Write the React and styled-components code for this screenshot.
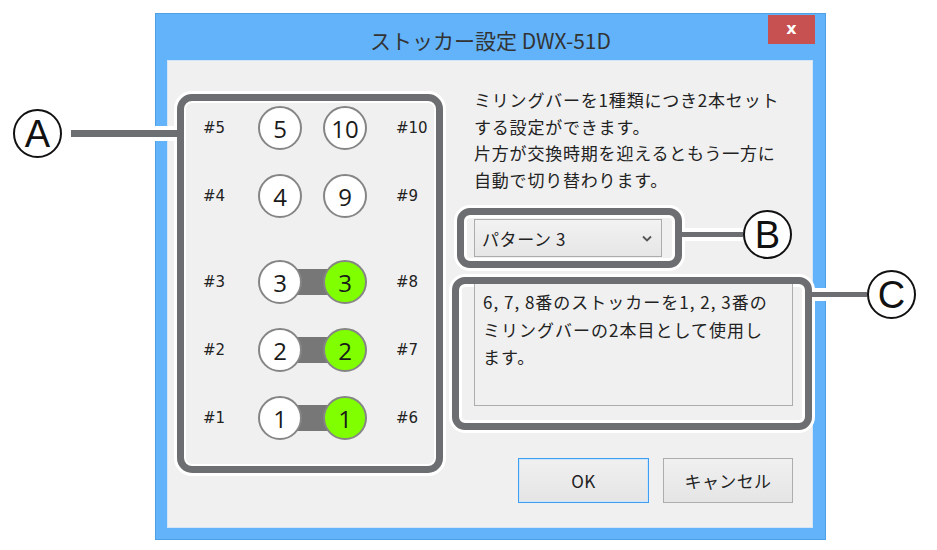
import React from 'react';
import styled, { createGlobalStyle } from 'styled-components';

const JP = `"Noto Sans CJK JP", "Noto Sans", sans-serif`;

const GlobalStyle = createGlobalStyle`
  * { box-sizing: border-box; }
  body {
    margin: 0;
    background: #fff;
    font-family: ${JP};
  }
`;

const slots = [
  { left: 5, right: 10 },
  { left: 4, right: 9 },
  { left: 3, right: 8, paired: true, spaced: true },
  { left: 2, right: 7, paired: true },
  { left: 1, right: 6, paired: true },
];

const App = () => {
  return (
    <React.Fragment>
      <GlobalStyle />
      <Page>
        <Window>
          <TitleBar>
            <Title>ストッカー設定 DWX-51D</Title>
            <CloseButton>x</CloseButton>
          </TitleBar>
          <Client>
            <SlotPanel>
              <Callout $side="left" $top={8}>
                <Mark>A</Mark>
                <Leader $w={106} $h={7} $gap={9} />
              </Callout>
              {slots.map((s) => (
                <SlotRow key={s.left} $spaced={s.spaced}>
                  <SlotLabel>#{s.left}</SlotLabel>
                  <Pair $paired={s.paired}>
                    <Stocker>{s.left}</Stocker>
                    <Stocker $green={s.paired}>{s.paired ? s.left : s.right}</Stocker>
                  </Pair>
                  <SlotLabel $right>#{s.right}</SlotLabel>
                </SlotRow>
              ))}
            </SlotPanel>

            <Side>
              <Note>
                ミリングバーを1種類につき2本セット<br />
                する設定ができます。<br />
                片方が交換時期を迎えるともう一方に<br />
                自動で切り替わります。
              </Note>

              <PatternBox>
                <Combo>
                  <span>パターン 3</span>
                  <svg width="10" height="7" viewBox="0 0 10 7">
                    <path d="M1 1.5 L5 5.5 L9 1.5" fill="none" stroke="#555" strokeWidth="1.8" />
                  </svg>
                </Combo>
                <Callout $side="right" $top={-5}>
                  <Leader $w={61} $h={5} />
                  <Mark>B</Mark>
                </Callout>
              </PatternBox>

              <InfoBox>
                <InfoText>
                  6, 7, 8番のストッカーを1, 2, 3番の<br />
                  ミリングバーの2本目として使用し<br />
                  ます。
                </InfoText>
                <Callout $side="right" $top={-14}>
                  <Leader $w={55} $h={5} />
                  <Mark>C</Mark>
                </Callout>
              </InfoBox>

              <ButtonRow>
                <Button $primary>OK</Button>
                <Button>キャンセル</Button>
              </ButtonRow>
            </Side>
          </Client>
        </Window>
      </Page>
    </React.Fragment>
  );
};

const Page = styled.div`
  width: 937px;
  height: 550px;
  padding: 13px 0 0 155px;
  background: #fff;
  overflow: hidden;
`;

const Window = styled.div`
  width: 671px;
  height: 527px;
  background: #62b3fa;
  border: 1px solid #4f9fe4;
  padding: 0 12px 11px 11px;
  display: flex;
  flex-direction: column;
`;

const TitleBar = styled.div`
  height: 46px;
  display: grid;
  grid-template-columns: 1fr auto 1fr;
  margin: 0 -12px 0 -11px;
`;

const Title = styled.div`
  grid-column: 2;
  padding-top: 10px;
  font-size: 21px;
  line-height: 32px;
  color: #333;
  white-space: nowrap;
`;

const CloseButton = styled.div`
  grid-column: 3;
  justify-self: end;
  align-self: start;
  margin: 1px 10px 0 0;
  width: 47px;
  height: 29px;
  background: #c75050;
  color: #fff;
  font-family: "DejaVu Sans", sans-serif;
  font-weight: 700;
  font-size: 16px;
  line-height: 27px;
  text-align: center;
`;

const Client = styled.div`
  flex: 1;
  display: flex;
  align-items: flex-start;
  background: #f0f0f0;
  border: 1px solid #d3e5f6;
`;

const SlotPanel = styled.div`
  position: relative;
  margin: 33px 0 0 9px;
  width: 266px;
  height: 379px;
  border: 7px solid #6d6e71;
  border-radius: 15px;
  box-shadow: 0 0 0 3px #fff, inset 0 0 0 2px #fff;
  padding: 5px 0 0 19px;
  display: flex;
  flex-direction: column;
  gap: 24px;
`;

const SlotRow = styled.div`
  display: flex;
  align-items: center;
  height: 44px;
  margin-top: ${(p) => (p.$spaced ? '18px' : '0')};
`;

const SlotLabel = styled.span`
  width: ${(p) => (p.$right ? 'auto' : '55px')};
  margin-left: ${(p) => (p.$right ? '29px' : '0')};
  font-family: "DejaVu Sans", sans-serif;
  font-size: 15px;
  color: #222;
`;

const Pair = styled.div`
  width: 109px;
  display: flex;
  justify-content: space-between;
  background: ${(p) =>
    p.$paired ? 'linear-gradient(#777, #777) center / 64px 26px no-repeat' : 'none'};
`;

const Stocker = styled.div`
  width: 44px;
  height: 44px;
  border-radius: 50%;
  border: 2px solid #858585;
  background: ${(p) => (p.$green ? '#80ff00' : '#fff')};
  display: flex;
  align-items: center;
  justify-content: center;
  font-family: "Open Sans", "Noto Sans", sans-serif;
  font-size: 24px;
  color: #1a1a1a;
`;

const Side = styled.div`
  margin: 26px 0 0 9px;
  width: 360px;
  display: flex;
  flex-direction: column;
`;

const Note = styled.p`
  margin: 0 0 0 22px;
  font-size: 17px;
  line-height: 26.5px;
  letter-spacing: 0.8px;
  color: #222;
  white-space: nowrap;
`;

const OutlineBox = styled.div`
  position: relative;
  border: 7px solid #6d6e71;
  border-radius: 13px;
  box-shadow: 0 0 0 3px #fff, inset 0 0 0 3px #fff;
`;

const PatternBox = styled(OutlineBox)`
  margin: 15px 0 0 5px;
  width: 225px;
  padding: 4px 13px 4px 10px;
`;

const Combo = styled.div`
  height: 38px;
  border: 1px solid #acacac;
  background: linear-gradient(#f2f2f2, #e6e6e6);
  display: flex;
  align-items: center;
  justify-content: space-between;
  padding: 0 9px 0 7px;
  font-size: 17px;
  color: #222;
  letter-spacing: 0.6px;
`;

const InfoBox = styled(OutlineBox)`
  margin-top: 9px;
  width: 360px;
  height: 153px;
  padding: 0 12px 17px 15px;
`;

const InfoText = styled.div`
  height: 100%;
  border: 1px solid #adadad;
  border-top: none;
  background: #f0f0f0;
  padding: 4px 8px;
  font-size: 17px;
  line-height: 27.5px;
  letter-spacing: 1px;
  color: #222;
  white-space: nowrap;
`;

const ButtonRow = styled.div`
  margin-top: 28px;
  padding-right: 19px;
  display: flex;
  justify-content: flex-end;
  gap: 14px;
`;

const Button = styled.div`
  width: ${(p) => (p.$primary ? '131px' : '130px')};
  height: 45px;
  border: 1px solid ${(p) => (p.$primary ? '#3d9ef2' : '#adadad')};
  box-shadow: ${(p) => (p.$primary ? 'inset 0 0 0 1px #cde6fb' : 'none')};
  background: linear-gradient(#f0f0f0, #e5e5e5);
  display: flex;
  align-items: center;
  justify-content: center;
  font-size: 17px;
  color: #222;
  letter-spacing: 0.4px;
`;

const Callout = styled.div`
  position: absolute;
  top: ${(p) => p.$top}px;
  ${(p) => (p.$side === 'left' ? 'right: calc(100% + 7px);' : 'left: calc(100% + 7px);')}
  display: flex;
  align-items: center;
`;

const Leader = styled.div`
  width: ${(p) => p.$w}px;
  height: ${(p) => p.$h}px;
  margin-left: ${(p) => p.$gap || 0}px;
  background: #6d6e71;
  box-shadow: 0 -4px 0 #fff, 0 4px 0 #fff;
`;

const Mark = styled.div`
  width: 49px;
  height: 49px;
  flex: none;
  border-radius: 50%;
  border: 2.5px solid #111;
  background: #fff;
  display: flex;
  align-items: center;
  justify-content: center;
  font-family: "Liberation Sans", sans-serif;
  font-size: 38px;
  line-height: 1;
  color: #111;
`;

export default App;
